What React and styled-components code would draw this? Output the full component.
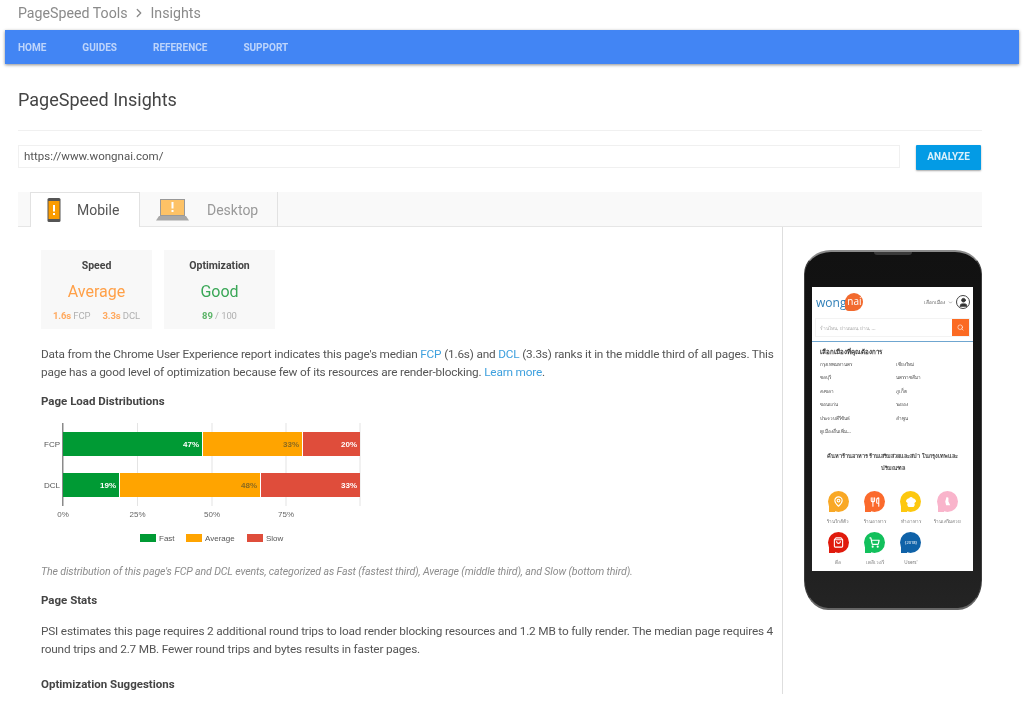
import React from 'react';
import styled, { createGlobalStyle } from 'styled-components';
import { ChevronRight, ChevronDown, Search, MapPin, Utensils, ChefHat, ShoppingBag, ShoppingCart, User } from 'lucide-react';

const GlobalStyle = createGlobalStyle`
  html, body {
    margin: 0;
    padding: 0;
    background: #fff;
    font-family: Roboto, "Liberation Sans", sans-serif;
    color: #555;
  }
`;

const Page = styled.div`
  width: 1024px;
  height: 705px;
  overflow: hidden;
  filter: blur(0.35px);
`;

const Breadcrumb = styled.div`
  height: 30px;
  padding: 0 0 4px 18px;
  box-sizing: border-box;
  display: flex;
  align-items: center;
  gap: 4.5px;
  font-size: 14.2px;
  color: #8a8a8a;
`;

const Nav = styled.nav`
  margin: 0 5px;
  height: 34px;
  padding-left: 13px;
  background: #4285f4;
  box-shadow: 0 1px 3px rgba(0, 0, 0, 0.45);
  display: flex;
  align-items: center;
  gap: 36px;
`;

const NavItem = styled.a`
  font-size: 10px;
  font-weight: 700;
  color: rgba(255, 255, 255, 0.65);
`;

const Main = styled.main`
  width: 964px;
  margin-left: 18px;
`;

const Title = styled.h1`
  height: 67px;
  margin: 0;
  padding-top: 24px;
  box-sizing: border-box;
  border-bottom: 1px solid #f0f0f0;
  font-size: 18px;
  font-weight: 400;
  line-height: 24px;
  color: #444;
`;

const UrlRow = styled.div`
  display: flex;
  justify-content: space-between;
  align-items: flex-start;
  margin-top: 14px;
  padding-right: 1px;
`;

const UrlInput = styled.div`
  width: 882px;
  height: 23px;
  padding-left: 5px;
  box-sizing: border-box;
  border: 1px solid #f0f0f0;
  font-size: 11.5px;
  line-height: 21px;
  color: #555;
`;

const AnalyzeButton = styled.button`
  width: 65px;
  height: 25px;
  padding: 0 0 3px;
  border: 0;
  border-radius: 1px;
  background: #039be5;
  box-shadow: 0 1px 2px rgba(0, 0, 0, 0.35);
  color: rgba(255, 255, 255, 0.85);
  font-family: inherit;
  font-size: 10px;
  font-weight: 700;
`;

const Tabs = styled.div`
  display: flex;
  height: 35px;
  margin-top: 22px;
  padding-left: 12px;
  box-sizing: border-box;
  background: #f9f9f9;
  border-bottom: 1px solid #e6e6e6;
`;

const Tab = styled.div`
  height: 35px;
  box-sizing: border-box;
  display: flex;
  align-items: center;
  font-size: 14px;
  padding-left: 16px;
  width: ${(p) => (p.$active ? '110px' : '138px')};
  gap: ${(p) => (p.$active ? '16px' : '18px')};
  color: ${(p) => (p.$active ? '#555' : '#999')};
  background: ${(p) => (p.$active ? '#fff' : 'transparent')};
  border-right: 1px solid #e2e2e2;
  border-top: ${(p) => (p.$active ? '1px solid #e2e2e2' : '0')};
  border-left: ${(p) => (p.$active ? '1px solid #e2e2e2' : '0')};
`;

const Results = styled.div`
  display: flex;
  height: 467px;
`;

const Report = styled.div`
  width: 765px;
  box-sizing: border-box;
  padding: 23px 7px 0 23px;
  border-right: 1px solid #dedede;
  overflow: hidden;
`;

const Cards = styled.div`
  display: flex;
  gap: 12px;
`;

const Card = styled.div`
  width: ${(p) => p.$width}px;
  height: 79px;
  padding-top: 9px;
  box-sizing: border-box;
  background: #f8f8f8;
  text-align: center;
`;

const CardTitle = styled.div`
  font-size: 10.5px;
  line-height: 14px;
  font-weight: 700;
  color: #444;
`;

const CardVerdict = styled.div`
  margin-top: 9px;
  font-size: 16px;
  line-height: 20px;
  color: ${(p) => p.$color};
`;

const CardMeta = styled.div`
  margin-top: 8px;
  display: flex;
  justify-content: center;
  gap: 12px;
  font-size: 9.5px;
  line-height: 12px;
  letter-spacing: -0.1px;
  color: #b0b0b0;

  b {
    font-weight: 700;
    color: ${(p) => p.$color};
  }
`;

const Paragraph = styled.p`
  margin: ${(p) => p.$top}px 0 0;
  font-size: 11.8px;
  line-height: 17.5px;
  letter-spacing: -0.18px;
  color: #555;

  a {
    color: #3ea0de;
  }
`;

const Heading = styled.h3`
  margin: ${(p) => p.$top}px 0 0;
  font-size: 11.5px;
  line-height: 14px;
  font-weight: 700;
  color: #444;
`;

const ChartSvg = styled.svg`
  display: block;
  margin-top: 10px;
  font-family: "Liberation Sans", Arial, sans-serif;
`;

const Caption = styled.p`
  margin: 15px 0 0;
  font-size: 10.6px;
  line-height: 14px;
  font-style: italic;
  letter-spacing: -0.135px;
  color: #8c8c8c;
`;

const PhoneColumn = styled.aside`
  padding: 23px 0 0 21px;
`;

const PhoneBody = styled.div`
  position: relative;
  width: 178px;
  height: 360px;
  padding: 35px 8px 37px 7px;
  box-sizing: border-box;
  border-radius: 27px 27px 24px 24px / 24px 24px 30px 30px;
  background: linear-gradient(#111 0, #171717 60%, #242424 100%);
  border: 1px solid #3c3c3c;
  border-top: 2px solid #8a8a8a;
  border-bottom: 2px solid #666;

  &::before {
    content: '';
    position: absolute;
    top: 0;
    left: 69px;
    width: 38px;
    height: 3px;
    border-radius: 0 0 4px 4px;
    background: #3a3a3a;
  }
`;

const Screen = styled.div`
  height: 100%;
  background: #fff;
  overflow: hidden;
  font-family: "Noto Sans", "DejaVu Sans", sans-serif;
  filter: blur(0.25px);
`;

const ScreenHeader = styled.div`
  display: flex;
  align-items: center;
  justify-content: space-between;
  height: 30px;
  padding: 0 3px 0 4px;
`;

const Logo = styled.div`
  display: flex;
  align-items: center;
  font-family: "Open Sans", sans-serif;
  font-size: 12px;
  color: #2f7fb8;
`;

const LogoBubble = styled.span`
  width: 18px;
  height: 18px;
  margin-left: -1px;
  border-radius: 50% 50% 50% 4px;
  background: #f26a2e;
  color: #fff;
  font-size: 10px;
  line-height: 17px;
  text-align: center;
`;

const HeaderRight = styled.div`
  display: flex;
  align-items: center;
  gap: 3px;
  font-size: 4.5px;
  color: #555;
`;

const Avatar = styled.span`
  width: 12px;
  height: 12px;
  border: 1px solid #444;
  border-radius: 50%;
  display: flex;
  align-items: flex-end;
  justify-content: center;
  overflow: hidden;
  color: #333;
`;

const SearchBox = styled.div`
  display: flex;
  align-items: center;
  justify-content: space-between;
  height: 17px;
  margin: 1px 3px 0;
  padding-left: 4px;
  border: 1px solid #f3f3f3;
  font-size: 4.8px;
  color: #aaa;
`;

const SearchButton = styled.span`
  width: 17px;
  height: 17px;
  background: #fb6a22;
  color: #fff;
  display: flex;
  align-items: center;
  justify-content: center;
`;

const CityPanel = styled.div`
  margin-top: 4px;
  padding: 5px 8px 0;
  border-top: 1px solid #6fa6d0;
`;

const CityTitle = styled.div`
  font-size: 6.2px;
  line-height: 10px;
  font-weight: 700;
  color: #333;
`;

const CityGrid = styled.div`
  display: grid;
  grid-template-columns: 76px 1fr;
  grid-auto-rows: 13.4px;
  margin-top: 3px;
  font-size: 4.6px;
  line-height: 9px;
  color: #444;
`;

const Tagline = styled.div`
  margin-top: 10px;
  padding: 0 10px;
  font-size: 5.6px;
  line-height: 12px;
  font-weight: 700;
  text-align: center;
  color: #444;
`;

const Categories = styled.div`
  display: grid;
  grid-template-columns: repeat(4, 36.4px);
  grid-auto-rows: 41px;
  margin: 17px 0 0 8px;
`;

const Category = styled.div`
  display: flex;
  flex-direction: column;
  align-items: center;
  gap: 5px;
  font-size: 4.6px;
  line-height: 8px;
  color: #777;
  white-space: nowrap;
`;

const Bubble = styled.span`
  position: relative;
  width: 21px;
  height: 21px;
  border-radius: 50%;
  background: ${(p) => p.$color};
  color: #fff;
  display: flex;
  align-items: center;
  justify-content: center;
  font-size: 4px;

  &::after {
    content: '';
    position: absolute;
    left: 1px;
    bottom: 0;
    width: 6px;
    height: 6px;
    background: ${(p) => p.$color};
  }

  svg {
    position: relative;
    z-index: 1;
  }
`;

const BubbleLabel = styled.span`
  position: relative;
  z-index: 1;
`;

const MobileIcon = () => (
  <svg width="14" height="24" viewBox="0 0 14 24">
    <rect x="0.5" y="0" width="13" height="24" rx="1.5" fill="#555" />
    <rect x="1.5" y="3" width="11" height="18" fill="#fb9c00" />
    <rect x="6" y="7" width="2" height="6.5" fill="#fff" />
    <rect x="6" y="15" width="2" height="2" fill="#fff" />
  </svg>
);

const LaptopIcon = () => (
  <svg width="33" height="22" viewBox="0 0 33 22">
    <rect x="4" y="0" width="25" height="17" fill="#999" />
    <rect x="5" y="1" width="23" height="15" fill="#fdc266" />
    <rect x="15.5" y="3" width="2" height="6.5" fill="#fff" />
    <rect x="15.5" y="11" width="2" height="2" fill="#fff" />
    <path d="M3 17h27l3 4.5H0z" fill="#a8a8a8" />
  </svg>
);

const SEGMENTS = [
  { y: 432, label: 'FCP', parts: [[63, 202, '#009a34', '47%', '#fff'], [203, 302, '#ffa400', '33%', '#8a6a20'], [303, 360, '#df4d3b', '20%', '#fff']] },
  { y: 473, label: 'DCL', parts: [[63, 119, '#009a34', '19%', '#fff'], [120, 260, '#ffa400', '48%', '#8a6a20'], [261, 360, '#df4d3b', '33%', '#fff']] },
];

const LEGEND = [
  [140, 'Fast', '#009a34'],
  [186, 'Average', '#ffa400'],
  [247, 'Slow', '#df4d3b'],
];

const Chart = () => (
  <ChartSvg width="340" height="132" viewBox="41 418 340 132">
    {[137.5, 212, 286, 360].map((x) => (
      <rect key={x} x={x - 0.5} y="423" width="1" height="83" fill="#e4e4e4" />
    ))}
    <rect x="62" y="423" width="1.5" height="83" fill="#8a8a8a" />
    {SEGMENTS.map((row) => (
      <g key={row.label}>
        <text x="44" y={row.y + 15} fontSize="8" fill="#555">{row.label}</text>
        {row.parts.map(([from, to, color, value, ink]) => (
          <g key={from}>
            <rect x={from} y={row.y} width={to - from} height="24" fill={color} />
            <text x={to - 3} y={row.y + 15} fontSize="8" fontWeight="700" textAnchor="end" fill={ink}>{value}</text>
          </g>
        ))}
      </g>
    ))}
    {[[63, '0%'], [137.5, '25%'], [212, '50%'], [286, '75%']].map(([x, t]) => (
      <text key={t} x={x} y="517" fontSize="8" textAnchor="middle" fill="#666">{t}</text>
    ))}
    {LEGEND.map(([x, t, color]) => (
      <g key={t}>
        <rect x={x} y="534" width="16" height="8" fill={color} />
        <text x={x + 19} y="541" fontSize="8" fill="#555">{t}</text>
      </g>
    ))}
  </ChartSvg>
);

const CITIES = [
  'กรุงเทพมหานคร', 'เชียงใหม่', 'ชลบุรี', 'นครราชสีมา', 'สงขลา', 'ภูเก็ต',
  'ขอนแก่น', 'ระยอง', 'ประจวบคีรีขันธ์', 'ลำพูน', 'ดูเมืองอื่นเพิ่ม...',
];

const Lipstick = () => (
  <svg width="11" height="11" viewBox="0 0 12 12">
    <path d="M5 1l2 1v4l2 4H4.5L3.5 6z" fill="#fff" />
  </svg>
);

const CATEGORIES = [
  { color: '#f9a825', label: 'ร้านใกล้ตัว', icon: <MapPin size={11} strokeWidth={2.4} /> },
  { color: '#fb6a2c', label: 'ร้านอาหาร', icon: <Utensils size={10} strokeWidth={2.6} /> },
  { color: '#fdc80f', label: 'ทำอาหาร', icon: <ChefHat size={12} fill="#fff" /> },
  { color: '#f9b4cb', label: 'ร้านเสริมสวย', icon: <Lipstick /> },
  { color: '#e01a0c', label: 'ดีล', icon: <ShoppingBag size={11} strokeWidth={2.4} /> },
  { color: '#12c05c', label: 'เดลิเวอรี', icon: <ShoppingCart size={11} strokeWidth={2.6} /> },
  { color: '#0f62a8', label: "Users'", icon: <BubbleLabel>{'{2018}'}</BubbleLabel> },
];

const Phone = () => (
  <PhoneBody>
    <Screen>
      <ScreenHeader>
        <Logo>
          wong<LogoBubble>nai</LogoBubble>
        </Logo>
        <HeaderRight>
          เลือกเมือง <ChevronDown size={5} />
          <Avatar><User size={11} fill="#333" /></Avatar>
        </HeaderRight>
      </ScreenHeader>
      <SearchBox>
        ร้านไหน, ย่านนอน, ย่าน, ...
        <SearchButton><Search size={7} /></SearchButton>
      </SearchBox>
      <CityPanel>
        <CityTitle>เลือกเมืองที่คุณต้องการ</CityTitle>
        <CityGrid>
          {CITIES.map((city) => <span key={city}>{city}</span>)}
        </CityGrid>
      </CityPanel>
      <Tagline>ค้นหาร้านอาหาร ร้านเสริมสวยและสปา ในกรุงเทพและปริมณฑล</Tagline>
      <Categories>
        {CATEGORIES.map((item) => (
          <Category key={item.label}>
            <Bubble $color={item.color}>{item.icon}</Bubble>
            {item.label}
          </Category>
        ))}
      </Categories>
    </Screen>
  </PhoneBody>
);

export default function App() {
  return (
    <Page>
      <GlobalStyle />
      <Breadcrumb>
        PageSpeed Tools <ChevronRight size={14} strokeWidth={2.2} /> Insights
      </Breadcrumb>
      <Nav>
        <NavItem>HOME</NavItem>
        <NavItem>GUIDES</NavItem>
        <NavItem>REFERENCE</NavItem>
        <NavItem>SUPPORT</NavItem>
      </Nav>
      <Main>
        <Title>PageSpeed Insights</Title>
        <UrlRow>
          <UrlInput>https://www.wongnai.com/</UrlInput>
          <AnalyzeButton>ANALYZE</AnalyzeButton>
        </UrlRow>
        <Tabs>
          <Tab $active><MobileIcon />Mobile</Tab>
          <Tab><LaptopIcon />Desktop</Tab>
        </Tabs>
        <Results>
          <Report>
            <Cards>
              <Card $width={111}>
                <CardTitle>Speed</CardTitle>
                <CardVerdict $color="#ffa048">Average</CardVerdict>
                <CardMeta $color="#ffa95e">
                  <span><b>1.6s</b> FCP</span>
                  <span><b>3.3s</b> DCL</span>
                </CardMeta>
              </Card>
              <Card $width={111}>
                <CardTitle>Optimization</CardTitle>
                <CardVerdict $color="#3aa757">Good</CardVerdict>
                <CardMeta $color="#5cb468">
                  <span><b>89</b> / 100</span>
                </CardMeta>
              </Card>
            </Cards>
            <Paragraph $top={17}>
              Data from the Chrome User Experience report indicates this page's median <a>FCP</a> (1.6s) and <a>DCL</a> (3.3s) ranks it in the middle third of all pages. This page has a good level of optimization because few of its resources are render-blocking. <a>Learn more</a>.
            </Paragraph>
            <Heading $top={13}>Page Load Distributions</Heading>
            <Chart />
            <Caption>The distribution of this page's FCP and DCL events, categorized as Fast (fastest third), Average (middle third), and Slow (bottom third).</Caption>
            <Heading $top={14}>Page Stats</Heading>
            <Paragraph $top={16}>
              PSI estimates this page requires 2 additional round trips to load render blocking resources and 1.2 MB to fully render. The median page requires 4 round trips and 2.7 MB. Fewer round trips and bytes results in faster pages.
            </Paragraph>
            <Heading $top={19}>Optimization Suggestions</Heading>
          </Report>
          <PhoneColumn>
            <Phone />
          </PhoneColumn>
        </Results>
      </Main>
    </Page>
  );
}
